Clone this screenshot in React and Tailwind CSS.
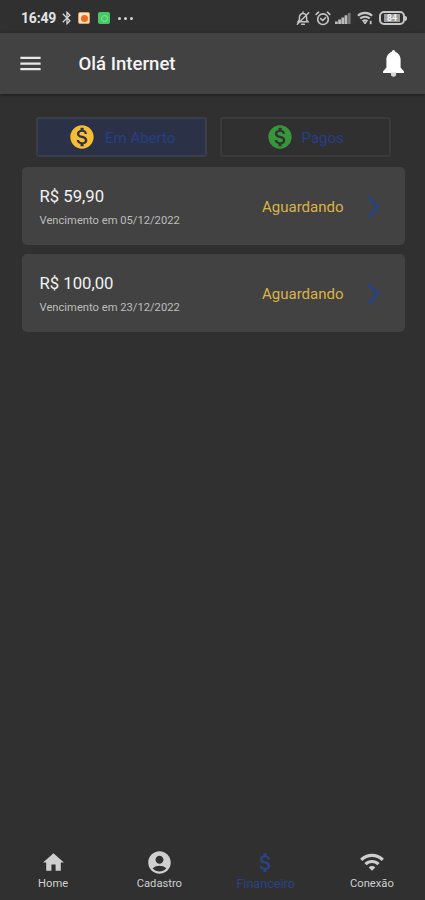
import React from 'react';
import {
    MdMenu, MdMonetizationOn, MdHome, MdAccountCircle, MdAttachMoney, MdWifi, MdBluetooth,
} from 'react-icons/md';

const faturas = [
    { valor: 'R$ 59,90', vencimento: '05/12/2022', status: 'Aguardando' },
    { valor: 'R$ 100,00', vencimento: '23/12/2022', status: 'Aguardando' },
];

const StatusBar = () => (
    <div className="h-[33px] shrink-0 flex items-center pl-[21px] pr-[18px] pt-[3px] text-[#d4d4d4]">
        <span className="w-[36px] text-[14px] leading-none font-bold tracking-[-0.2px] text-[#e4e4e4]">16:49</span>
        <MdBluetooth className="ml-[2px]" size={16} />
        <div className="ml-[3px] w-[12px] h-[12px] rounded-[2px] bg-[#f6e6d6] border border-[#e99a55] flex items-center justify-center">
            <div className="w-[7px] h-[7px] rounded-full bg-[#f26a16]" />
        </div>
        <div className="ml-[8px] w-[12px] h-[12px] rounded-[2px] bg-[#45c765] flex items-center justify-center">
            <div className="w-[7px] h-[7px] rounded-full border border-[#8be0a0]" />
        </div>
        <div className="ml-[8px] flex gap-[3px]">
            <i className="w-[3px] h-[3px] rounded-full bg-[#d4d4d4]" />
            <i className="w-[3px] h-[3px] rounded-full bg-[#d4d4d4]" />
            <i className="w-[3px] h-[3px] rounded-full bg-[#d4d4d4]" />
        </div>

        {/* silencioso */}
        <svg className="ml-auto" width="14" height="15" viewBox="0 0 14 15" fill="none" stroke="#c4c4c4" strokeWidth="1.5" strokeLinecap="round">
            <path d="M2 10.8h10l-1.4-2V6.2A3.6 3.6 0 0 0 7 2.6a3.6 3.6 0 0 0-3.6 3.6v2.6zM5.6 13.2h2.8M7 1v1M1.3 13.2L12.7 1.8" />
        </svg>
        {/* alarme */}
        <svg className="ml-[5px]" width="16" height="15" viewBox="0 0 16 15" fill="none" stroke="#c8c8c8" strokeWidth="1.6" strokeLinecap="round">
            <circle cx="8" cy="8.2" r="5.3" />
            <path d="M1.2 3.4l2.4-2.2M14.8 3.4l-2.4-2.2M5.7 7.6l2 1.9 2.8-2.8" />
        </svg>
        {/* sinal */}
        <svg className="ml-[4px]" width="16" height="12" viewBox="0 0 16 12" fill="#bdbdbd">
            <path d="M0 9.5h2.8V12H0zM3.2 7.5H6V12H3.2zM6.4 5.5h2.8V12H6.4zM9.6 3.2h2.8V12H9.6z" />
            <path d="M12.8 1h2.8v11h-2.8z" fill="#777" />
        </svg>
        {/* wifi */}
        <svg className="ml-[6px]" width="17" height="14" viewBox="0 0 17 14" fill="none" stroke="#c8c8c8" strokeWidth="2.1">
            <path d="M.9 4.8a10.2 10.2 0 0 1 14.2 0M3.2 7.6a7 7 0 0 1 9.6 0M5.5 10.3a4 4 0 0 1 5 0" />
            <path d="M6.7 11.4h2.6L8 12.9z" fill="#c8c8c8" strokeWidth="1" />
            <path d="M13.7 13.2v-3.4" strokeWidth="1.8" />
        </svg>
        <div className="ml-[5px] w-[26px] h-[14px] rounded-[5px] border-2 border-[#c8c8c8] flex items-center justify-center">
            <span className="w-[16px] h-[8px] bg-[#9c9c9c] text-[9px] leading-[8px] font-bold text-center text-[#f0f0f0]">84</span>
        </div>
        <div className="w-[2px] h-[5px] rounded-r bg-[#c8c8c8]" />
    </div>
);

const Sino = () => (
    <svg className="ml-auto" width="21" height="27" viewBox="0 0 21 27" fill="#fff">
        <path d="M10.5 0c.8 0 1.500.8 1.700 1.800C15.200 2.900 17.600 6 17.600 9.500V17.500L21 21.500V23H0V21.500L3.400 17.500V9.500C3.400 6 5.800 2.900 8.800 1.800 9 .8 9.700 0 10.500 0z" />
        <path d="M7.900 22.500h5.200v1.600a2.600 2.600 0 0 1-5.200 0z" fill="#d8d8d8" />
    </svg>
);

const Header = () => (
    <header className="h-[61px] shrink-0 bg-[#424242] flex items-center pl-[17px] pr-[21px] shadow-[0_1px_3px_rgba(0,0,0,0.45)]">
        <MdMenu size={27} className="text-[#e8e8e8]" />
        <h1 className="ml-[34.5px] pt-[2px] text-[18.6px] font-medium text-[#f4f4f4]">Olá Internet</h1>
        <Sino />
    </header>
);

const Fatura = ({ valor, vencimento, status }) => (
    <div className="h-[78px] rounded-[5px] bg-[#424242] flex items-center pl-[17.5px] pr-[24px]">
        <div className="pt-[3px]">
            <p className="text-[16.7px] leading-[22px] text-[#f2f2f2]">{valor}</p>
            <p className="mt-[5px] text-[11.2px] leading-[16px] text-[#bdbdbd]">Vencimento em {vencimento}</p>
        </div>
        <span className="ml-auto pt-[3px] text-[15px] text-[#dcb345]">{status}</span>
        <svg className="ml-[23px] mt-[1px]" width="14" height="22" viewBox="0 0 14 22" fill="none" stroke="#264384" strokeWidth="3">
            <path d="M1.500 1.200L10.800 11 1.500 20.800" />
        </svg>
    </div>
);

const NavItem = ({ icon: Icon, size, label, ativo }) => (
    <div className={`flex-1 flex flex-col items-center ${ativo ? 'text-[#2a4487]' : 'text-[#cfcfcf]'}`}>
        <div className="h-[28px] flex items-center">
            <Icon size={size} />
        </div>
        <span className={`mt-[1px] leading-[14px] ${ativo ? 'text-[12.6px]' : 'text-[11.2px]'}`}>{label}</span>
    </div>
);

export default function App() {
    return (
        <div className="w-[425px] h-[900px] bg-[#303030] flex flex-col overflow-hidden font-['Roboto',sans-serif]">
            <StatusBar />
            <Header />

            <main className="flex-1 pl-[22px] pr-[20.5px] pt-[23px]">
                <div className="flex gap-[12.5px] pl-[14px]">
                    <button className="shrink-0 w-[171px] h-[40px] rounded-[3px] border-2 border-[#3a3e4a] bg-[#2b3248] flex items-center pl-[30px]">
                        <MdMonetizationOn size={28} className="text-[#f6bd35]" />
                        <span className="ml-[9px] pt-[2px] text-[15px] text-[#273f85]">Em Aberto</span>
                    </button>
                    <button className="shrink-0 w-[171px] h-[40px] rounded-[3px] border-2 border-[#3b3b3b] flex items-center pl-[44px]">
                        <MdMonetizationOn size={28} className="text-[#37963c]" />
                        <span className="ml-[8px] pt-[2px] text-[15px] text-[#273f85]">Pagos</span>
                    </button>
                </div>
                <div className="mt-[10px] flex flex-col gap-[9px]">
                    {faturas.map(f => <Fatura key={f.vencimento} {...f} />)}
                </div>
            </main>

            <nav className="h-[52px] shrink-0 flex">
                <NavItem icon={MdHome} size={25} label="Home" />
                <NavItem icon={MdAccountCircle} size={27} label="Cadastro" />
                <NavItem icon={MdAttachMoney} size={25} label="Financeiro" ativo />
                <NavItem icon={MdWifi} size={26} label="Conexão" />
            </nav>
        </div>
    );
}
